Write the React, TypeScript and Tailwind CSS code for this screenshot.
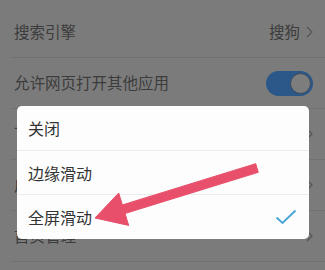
const rows = [
  { label: '搜索引擎', value: '搜狗', chevron: true },
  { label: '允许网页打开其他应用', toggle: true },
  { label: '下载设置', chevron: true },
  { label: '广告过滤', chevron: true },
  { label: '首页管理', chevron: true },
];

const options = ['关闭', '边缘滑动', '全屏滑动'];

function Chevron() {
  return (
    <svg width="7" height="12" viewBox="0 0 7 12" className="shrink-0">
      <path d="M1 1l5 5-5 5" fill="none" stroke="#555" strokeWidth="1.2" />
    </svg>
  );
}

export default function App() {
  return (
    <div
      className="relative h-[270px] w-[325px] overflow-hidden bg-[#7b7b7b]"
      style={{ fontFamily: '"Noto Sans CJK SC", "Noto Sans", sans-serif' }}
    >
      <ul className="pt-[7px]">
        {rows.map((row) => (
          <li key={row.label} className="ml-[10px] border-b border-[#717171]">
            <div className="flex h-[50px] items-center justify-between pl-[4px] pr-[12px]">
              <span className="text-[15.5px] text-[#3c3c3c]">{row.label}</span>
              {row.toggle ? (
                <div className="flex h-[25px] w-[47px] items-center justify-end rounded-full bg-[#2b5789] pr-[2px]">
                  <div className="h-[21px] w-[21px] rounded-full border border-[#3b4a5c] bg-[#7d7d7d]" />
                </div>
              ) : (
                <div className="flex items-center gap-[6px]">
                  {row.value && <span className="text-[15.5px] text-[#3c3c3c]">{row.value}</span>}
                  <Chevron />
                </div>
              )}
            </div>
          </li>
        ))}
      </ul>

      <div className="absolute left-[17px] top-[106px] w-[292px] overflow-hidden rounded-[5px] bg-[#fdfdfd]">
        {options.map((opt, i) => (
          <div
            key={opt}
            className={`flex items-center justify-between pl-[11px] pr-[12px] ${i === 0 ? 'h-[45px]' : 'h-[44px]'} ${i < 2 ? 'border-b border-[#ededed]' : ''}`}
          >
            <span className="text-[16px] text-[#333]">{opt}</span>
            {i === 2 && (
              <svg width="22" height="16" viewBox="0 0 22 16">
                <path d="M1.5 8.5l6 5.5L20.5 1.5" fill="none" stroke="#4aa6d6" strokeWidth="2" />
              </svg>
            )}
          </div>
        ))}
      </div>

      <svg className="pointer-events-none absolute left-0 top-0" width="325" height="270">
        <polygon
          points="255.7,163.7 122.4,204.9 118.7,193 95,218 128.7,225.4 125,213.5 258.3,172.3"
          fill="#e84f6b"
          strokeLinejoin="round"
          stroke="#e84f6b"
          strokeWidth="1"
        />
      </svg>
    </div>
  );
}
